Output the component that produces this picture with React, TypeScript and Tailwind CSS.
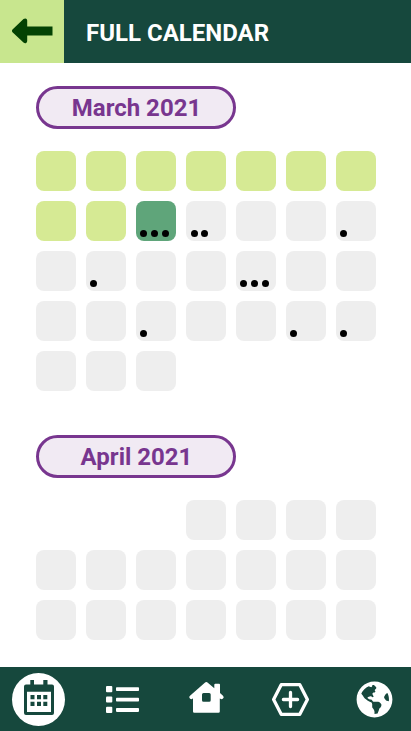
import type { ReactNode } from "react";
import { FaGlobeAmericas } from "react-icons/fa";

type Day = { id: number; tone: string; events: number };

const TONES = {
  past: "bg-[#d6ea94]",
  today: "bg-[#5fa57a]",
  upcoming: "bg-[#eeeeee]",
};

const MARCH_EVENTS: Record<number, number> = { 10: 3, 11: 2, 14: 1, 16: 1, 19: 3, 24: 1, 27: 1, 28: 1 };

const march: Day[] = Array.from({ length: 31 }, (_, i) => {
  const id = i + 1;
  const tone = id < 10 ? TONES.past : id === 10 ? TONES.today : TONES.upcoming;
  return { id, tone, events: MARCH_EVENTS[id] ?? 0 };
});

const april: Day[] = Array.from({ length: 18 }, (_, i) => ({ id: i + 1, tone: TONES.upcoming, events: 0 }));

function Month({ name, days, firstColumn }: { name: string; days: Day[]; firstColumn: string }) {
  return (
    <section>
      <h2 className="flex h-[43px] w-[200px] items-center justify-center rounded-full border-3 border-[#78368f] bg-[#f1eaf3] pl-px text-2xl font-bold text-[#78368f]">
        {name}
      </h2>
      <div className="mt-[22px] grid grid-cols-[repeat(7,40px)] gap-[10px]">
        {days.map((day, i) => (
          <button
            key={day.id}
            type="button"
            aria-label={`${name}, day ${day.id}`}
            className={`flex h-10 items-end rounded-lg px-1 pb-1 ${day.events === 2 ? "gap-[3px] pl-[5px]" : "gap-1"} ${day.tone} ${i === 0 ? firstColumn : ""}`}
          >
            {Array.from({ length: day.events }, (_, n) => (
              <span key={n} className="size-[7px] rounded-full bg-black" />
            ))}
          </button>
        ))}
      </div>
    </section>
  );
}

function NavButton({ label, active = false, children }: { label: string; active?: boolean; children: ReactNode }) {
  return (
    <button
      type="button"
      aria-label={label}
      className={`flex size-[53px] items-center justify-center rounded-full ${active ? "bg-white text-[#16483d]" : "text-white"}`}
    >
      {children}
    </button>
  );
}

function CalendarIcon() {
  return (
    <svg viewBox="0 0 53 53" className="size-full" fill="currentColor" aria-hidden="true">
      <path
        fillRule="evenodd"
        d="M18.3 7h3.7v4.500h9.300V7h4.200v4.500H40a2 2 0 0 1 2 2V40a2 2 0 0 1-2 2H14a2 2 0 0 1-2-2V13.500a2 2 0 0 1 2-2h4.300zM15 18.700V39h24V18.700z"
      />
      <path d="M18.500 22h4v4.300h-4zM25 22h4v4.300h-4zM31.300 22h4v4.300h-4zM18.500 28.800h4v4.200h-4zM25 28.800h4v4.200h-4zM31.300 28.800h4v4.200h-4z" />
    </svg>
  );
}

function ListIcon() {
  return (
    <svg viewBox="0 0 53 53" className="size-full" fill="currentColor" aria-hidden="true">
      {[13, 23.4, 33.8].map((y) => (
        <g key={y}>
          <rect x="10" y={y} width="6.300" height="6.200" rx="1" />
          <rect x="20" y={y + 1.3} width="23" height="3.800" rx="0.800" />
        </g>
      ))}
    </svg>
  );
}

function HomeIcon() {
  return (
    <svg viewBox="0 0 53 53" className="size-full" fill="currentColor" aria-hidden="true">
      <path
        fillRule="evenodd"
        d="M24.800 9.700a2.200 2.200 0 0 1 3 0l6.500 5.500V11.700q0-1 1-1h3.700q1 0 1 1v8.400l3 2.600a1.900 1.900 0 0 1 0 2.800q-1.300 1.200-2.600.300l-.6-.400V38.500q0 1.300-1.300 1.300H14.300q-1.300 0-1.300-1.300V25.300l-.500.400q-1.300 1-2.600-.200a1.900 1.900 0 0 1 .100-2.800zM23.500 20q-1.500 0-1.500 1.500v5.700q0 1.500 1.500 1.500h5.700q1.500 0 1.500-1.500v-5.700q0-1.500-1.500-1.500z"
      />
    </svg>
  );
}

function AddIcon() {
  return (
    <svg viewBox="0 0 53 53" className="size-full" fill="none" stroke="currentColor" strokeWidth="3.300" strokeLinejoin="round" strokeLinecap="round" aria-hidden="true">
      <path d="M17.200 11.700h18.600l7.600 14.800-7.600 14.800H17.200L9.600 26.500z" />
      <path d="M26.500 19.400v14.200M19.400 26.500h14.200" />
    </svg>
  );
}

export default function App() {
  return (
    <div className="flex min-h-screen flex-col bg-white font-['Roboto',sans-serif]">
      <header className="flex h-[63px] items-center bg-[#16483d]">
        <button type="button" aria-label="Back" className="flex h-full w-16 items-center bg-[#c8e68e] pb-0.5 pl-3 text-[#034203]">
          <svg viewBox="0 0 41 26" className="h-[26px] w-[41px]" fill="currentColor" aria-hidden="true">
            <path d="M.5 11.400 11.500 1Q13 0 14.200.700 15.200 1.200 15.200 2.500V8.500H40.500V17.500H15.200V23q0 1.300-1 1.900-1.200.700-2.700-.400L.5 14.200Q-.6 12.800.5 11.400z" />
          </svg>
        </button>
        <h1 className="ml-[22px] pt-0.5 text-2xl font-bold text-white">FULL CALENDAR</h1>
      </header>

      <main className="flex flex-1 flex-col gap-11 pt-[23px] pb-6 pl-9">
        <Month name="March 2021" days={march} firstColumn="col-start-1" />
        <Month name="April 2021" days={april} firstColumn="col-start-4" />
      </main>

      <nav aria-label="Main" className="flex h-16 items-center justify-between bg-[#16483d] pt-px pr-[10px] pl-3">
        <NavButton label="Calendar" active>
          <CalendarIcon />
        </NavButton>
        <NavButton label="List">
          <ListIcon />
        </NavButton>
        <NavButton label="Home">
          <HomeIcon />
        </NavButton>
        <NavButton label="Add">
          <AddIcon />
        </NavButton>
        <NavButton label="World">
          <FaGlobeAmericas className="size-[37px]" aria-hidden="true" />
        </NavButton>
      </nav>
    </div>
  );
}
